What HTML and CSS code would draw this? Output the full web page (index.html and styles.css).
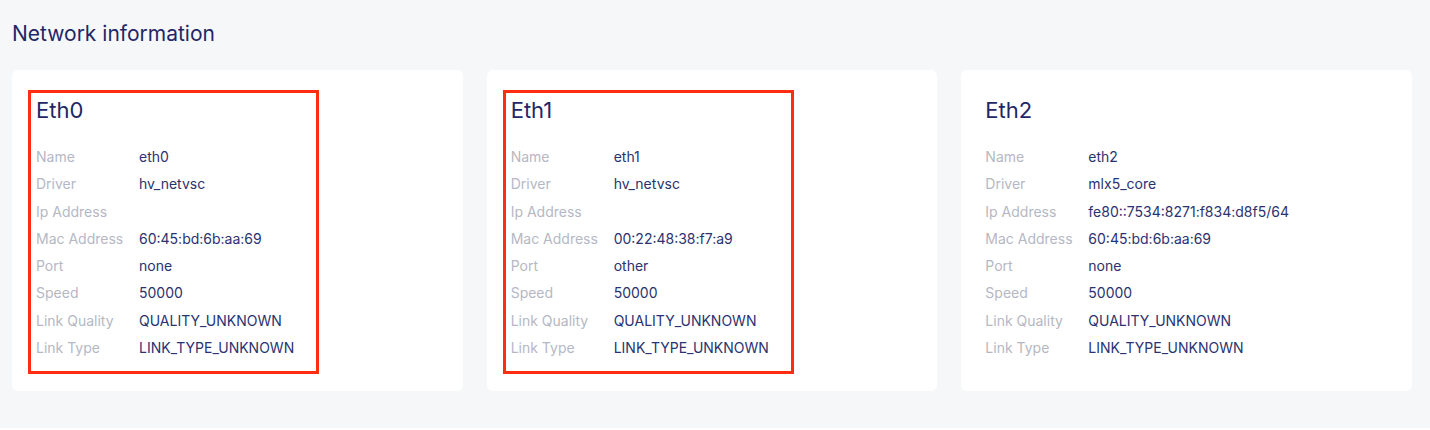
FILE: index.html
```html
<!DOCTYPE html>
<html lang="en">
<head>
    <meta charset="UTF-8">
    <meta name="viewport" content="width=device-width, initial-scale=1.0">
    <title>Network information</title>
    <link rel="stylesheet" href="styles.css">
</head>
<body>
    <main class="page">
        <h2 class="page-title">Network information</h2>

        <div class="cards">
            <section class="card">
                <div class="iface marked">
                    <h3>Eth0</h3>
                    <dl class="props">
                        <dt>Name</dt><dd>eth0</dd>
                        <dt>Driver</dt><dd>hv_netvsc</dd>
                        <dt>Ip Address</dt><dd></dd>
                        <dt>Mac Address</dt><dd>60:45:bd:6b:aa:69</dd>
                        <dt>Port</dt><dd>none</dd>
                        <dt>Speed</dt><dd>50000</dd>
                        <dt>Link Quality</dt><dd>QUALITY_UNKNOWN</dd>
                        <dt>Link Type</dt><dd>LINK_TYPE_UNKNOWN</dd>
                    </dl>
                </div>
            </section>

            <section class="card">
                <div class="iface marked">
                    <h3>Eth1</h3>
                    <dl class="props">
                        <dt>Name</dt><dd>eth1</dd>
                        <dt>Driver</dt><dd>hv_netvsc</dd>
                        <dt>Ip Address</dt><dd></dd>
                        <dt>Mac Address</dt><dd>00:22:48:38:f7:a9</dd>
                        <dt>Port</dt><dd>other</dd>
                        <dt>Speed</dt><dd>50000</dd>
                        <dt>Link Quality</dt><dd>QUALITY_UNKNOWN</dd>
                        <dt>Link Type</dt><dd>LINK_TYPE_UNKNOWN</dd>
                    </dl>
                </div>
            </section>

            <section class="card">
                <div class="iface">
                    <h3>Eth2</h3>
                    <dl class="props">
                        <dt>Name</dt><dd>eth2</dd>
                        <dt>Driver</dt><dd>mlx5_core</dd>
                        <dt>Ip Address</dt><dd>fe80::7534:8271:f834:d8f5/64</dd>
                        <dt>Mac Address</dt><dd>60:45:bd:6b:aa:69</dd>
                        <dt>Port</dt><dd>none</dd>
                        <dt>Speed</dt><dd>50000</dd>
                        <dt>Link Quality</dt><dd>QUALITY_UNKNOWN</dd>
                        <dt>Link Type</dt><dd>LINK_TYPE_UNKNOWN</dd>
                    </dl>
                </div>
            </section>
        </div>
    </main>
</body>
</html>
```

FILE: styles.css
```css
body {
    margin: 0;
    font-family: 'Inter', 'Noto Sans', sans-serif;
    background-color: #fff;
    color: #232a63;
}

.page {
    background-color: #f6f7f9;
    padding: 21px 18px 37px 12px;
}

.page-title {
    margin: 0 0 24px 0;
    font-size: 21px;
    font-weight: 400;
    line-height: 25px;
    color: #1f2766;
}

.cards {
    display: grid;
    grid-template-columns: repeat(3, 1fr);
    gap: 24px;
}

.card {
    background-color: #fff;
    border-radius: 6px;
    padding: 20px 16px 17px 16px;
}

.iface {
    border: 3px solid transparent;
    padding: 0 6px 10px 5px;
    box-sizing: border-box;
    width: 291px;
}

.iface.marked {
    border-color: #ff2d12;
}

.iface h3 {
    margin: 0 0 16px 0;
    font-size: 22px;
    font-weight: 400;
    line-height: 34px;
    color: #1f2766;
}

.props {
    display: grid;
    grid-template-columns: 103px 1fr;
    margin: 0;
    font-size: 14px;
    line-height: 27.3px;
    white-space: nowrap;
}

.props dt {
    color: #b5b8c4;
}

.props dd {
    margin: 0;
    color: #2a3270;
}
```
